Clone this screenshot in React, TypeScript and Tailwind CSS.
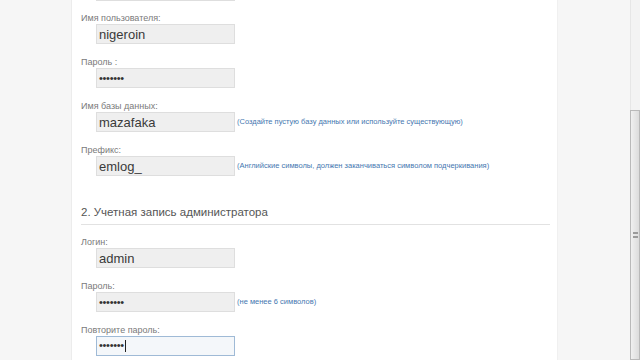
import React from "react";

const font = { fontFamily: '"Liberation Sans", Arial, sans-serif' };

function Field({
  label,
  value,
  password,
  hint,
  focused,
}: {
  label: string;
  value: string;
  password?: boolean;
  hint?: string;
  focused?: boolean;
}) {
  return (
    <div className="h-[44px] flex flex-col">
      <div className="h-[12px] leading-[12px] text-[9px] text-[#7a7a7a]">{label}</div>
      <div className="flex items-center">
        <div
          className={
            "ml-[15px] w-[139px] h-[20px] border flex items-center px-[2px] " +
            (focused ? "border-[#9fbad6] bg-[#f4f7fa]" : "border-[#dedede] bg-[#efefef]")
          }
        >
          {password ? (
            <span className="text-[11px] leading-none text-[#333] tracking-[-0.3px]">
              •••••••
              {focused && <span className="inline-block w-px h-[12px] bg-[#222] align-middle ml-px" />}
            </span>
          ) : (
            <span className="text-[13px] leading-none text-[#3a3a3a]">{value}</span>
          )}
        </div>
        {hint && <span className="ml-[2px] text-[7.5px] text-[#4577b0] whitespace-nowrap">{hint}</span>}
      </div>
    </div>
  );
}

export default function App() {
  return (
    <div className="w-[640px] h-[360px] overflow-hidden flex bg-[#f6f6f6]" style={font}>
      <div className="w-[72px] shrink-0 border-r border-[#ececec]" />
      <div className="w-[485px] shrink-0 bg-white pl-[9px] pr-[7px]">
        <div className="-mt-[19px] mb-[11px] ml-[15px] w-[139px] h-[20px] border border-[#dedede] bg-[#efefef]" />
        <Field label="Имя пользователя:" value="nigeroin" />
        <Field label="Пароль :" value="" password />
        <Field
          label="Имя базы данных:"
          value="mazafaka"
          hint="(Создайте пустую базу данных или используйте существующую)"
        />
        <Field
          label="Префикс:"
          value="emlog_"
          hint="(Английские символы, должен заканчиваться символом подчеркивания)"
        />
        <div className="pt-[16px] pb-[4px] border-b border-[#e2e2e2] mb-[11px]">
          <div className="h-[16px] leading-[16px] text-[11.5px] text-[#555]">
            2. Учетная запись администратора
          </div>
        </div>
        <Field label="Логин:" value="admin" />
        <Field label="Пароль:" value="" password hint="(не менее 6 символов)" />
        <Field label="Повторите пароль:" value="" password focused />
      </div>
      <div className="flex-1 border-l border-[#f0f0f0]" />
      <div className="w-[10px] shrink-0 flex flex-col">
        <div className="h-[110px] bg-[#f3f3f3] border-l border-[#e6e6e6]" />
        <div className="flex-1 border border-[#b9b9b9] bg-gradient-to-r from-[#f0f0f0] to-[#dcdcdc] flex items-center justify-center">
          <div className="w-[5px] h-[6px] border-y-2 border-[#9a9a9a]" />
        </div>
      </div>
    </div>
  );
}
